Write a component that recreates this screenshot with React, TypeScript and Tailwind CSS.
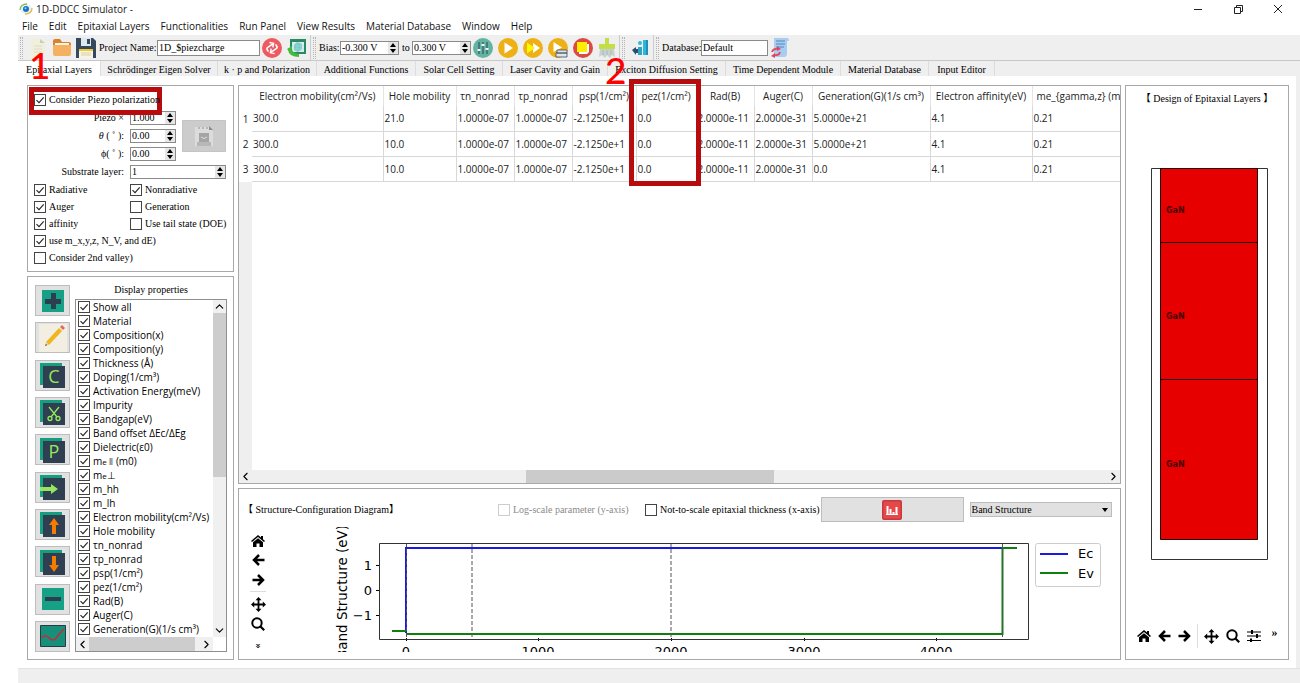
import { useState } from 'react';
import type { ReactNode } from 'react';
import { ChevronDown, ChevronLeft, ChevronRight, ChevronUp } from 'lucide-react';

const menus = [
  'File',
  'Edit',
  'Epitaxial Layers',
  'Functionalities',
  'Run Panel',
  'View Results',
  'Material Database',
  'Window',
  'Help'
];

const tabs = [
  { label: 'Epitaxial Layers', width: 'w-[83px]' },
  { label: 'Schrödinger Eigen Solver', width: 'w-[117px]' },
  { label: 'k · p and Polarization', width: 'w-[99px]' },
  { label: 'Additional Functions', width: 'w-[99px]' },
  { label: 'Solar Cell Setting', width: 'w-[87px]' },
  { label: 'Laser Cavity and Gain', width: 'w-[105px]' },
  { label: 'Exciton Diffusion Setting', width: 'w-[118px]' },
  { label: 'Time Dependent Module', width: 'w-[115px]' },
  { label: 'Material Database', width: 'w-[88px]' },
  { label: 'Input Editor', width: 'w-[66px]' }
];

const properties: ReactNode[] = [
  'Show all',
  'Material',
  'Composition(x)',
  'Composition(y)',
  'Thickness (Å)',
  'Doping(1/cm³)',
  'Activation Energy(meV)',
  'Impurity',
  'Bandgap(eV)',
  'Band offset ΔEc/ΔEg',
  'Dielectric(ε0)',
  <>m<span className="text-[8px]">e ǁ</span> (m0)</>,
  <>m<span className="text-[8px]">e</span>⊥</>,
  'm_hh',
  'm_lh',
  'Electron mobility(cm²/Vs)',
  'Hole mobility',
  'τn_nonrad',
  'τp_nonrad',
  'psp(1/cm²)',
  'pez(1/cm²)',
  'Rad(B)',
  'Auger(C)',
  'Generation(G)(1/s cm³)'
];

const columns = [
  { label: 'Electron mobility(cm²/Vs)', width: 'w-[131px]' },
  { label: 'Hole mobility', width: 'w-[73px]' },
  { label: 'τn_nonrad', width: 'w-[58px]' },
  { label: 'τp_nonrad', width: 'w-[58px]' },
  { label: 'psp(1/cm²)', width: 'w-[64px]' },
  { label: 'pez(1/cm²)', width: 'w-[60px]' },
  { label: 'Rad(B)', width: 'w-[58px]' },
  { label: 'Auger(C)', width: 'w-[58px]' },
  { label: 'Generation(G)(1/s cm³)', width: 'w-[118px]' },
  { label: 'Electron affinity(eV)', width: 'w-[102px]' },
  { label: 'me_{gamma,z} (m', width: '' }
];

const rows = [
  ['300.0', '21.0', '1.0000e-07', '1.0000e-07', '-2.1250e+1', '0.0', '2.0000e-11', '2.0000e-31', '5.0000e+21', '4.1', '0.21'],
  ['300.0', '10.0', '1.0000e-07', '1.0000e-07', '-2.1250e+1', '0.0', '2.0000e-11', '2.0000e-31', '5.0000e+21', '4.1', '0.21'],
  ['300.0', '10.0', '1.0000e-07', '1.0000e-07', '-2.1250e+1', '0.0', '2.0000e-11', '2.0000e-31', '0.0', '4.1', '0.21']
];

const SANS = "font-['Open_Sans','Noto_Sans',sans-serif]";
const SERIF = "font-['Liberation_Serif','Noto_Sans_CJK_TC',serif]";

interface CheckProps {
  label: ReactNode;
  checked?: boolean;
  disabled?: boolean;
  className?: string;
}

const Check = ({ label, checked = false, disabled = false, className = '' }: CheckProps) => {
  const [on, setOn] = useState(checked);

  return (
    <label className={`flex items-center gap-[3px] whitespace-nowrap ${disabled ? 'text-[#8a8a8a]' : ''} ${className}`}>
      <span className="grid shrink-0">
        <input
          type="checkbox"
          checked={on}
          disabled={disabled}
          onChange={() => setOn(!on)}
          className="col-start-1 row-start-1 size-[12px] appearance-none border border-[#444] bg-white disabled:border-[#ccc]"
        />
        {on && (
          <svg viewBox="0 0 12 12" className="pointer-events-none col-start-1 row-start-1 size-[12px]">
            <path d="M2.5 6.2 5 8.6 9.7 3.4" fill="none" stroke="#222" strokeWidth="1.1" />
          </svg>
        )}
      </span>
      <span>{label}</span>
    </label>
  );
};

interface SpinProps {
  id: string;
  value: string;
  label?: string;
  className?: string;
}

const Spin = ({ id, value, label, className = '' }: SpinProps) => (
  <div className={`flex h-[14px] border border-[#8a8a8a] bg-white ${className}`}>
    <input id={id} defaultValue={value} aria-label={label} className="w-0 min-w-0 flex-1 pl-px leading-3 outline-none" />
    <div className="flex w-[10px] flex-col justify-center gap-[2px] bg-[#e6e6e6]">
      <button aria-label="Increase" className="flex justify-center">
        <svg viewBox="0 0 6 4" className="h-1 w-[6px]"><path d="M3 0 6 4H0z" /></svg>
      </button>
      <button aria-label="Decrease" className="flex justify-center">
        <svg viewBox="0 0 6 4" className="h-1 w-[6px]"><path d="M0 0h6L3 4z" /></svg>
      </button>
    </div>
  </div>
);

const Grip = () => <div className="h-[22px] w-[3px] border-x border-dotted border-[#b5b5b5]" />;

/* Toolbar icons */
const Logo = () => (
  <svg viewBox="0 0 14 12" className="h-3 w-[14px]">
    <ellipse cx="7" cy="6" rx="6" ry="5" fill="#e8f1f6" />
    <path d="M1 7C1 3 4 1 8 1" fill="none" stroke="#7fb84a" strokeWidth="1.3" />
    <path d="M13 5c0 4-3 6-7 6" fill="none" stroke="#e4bc4a" strokeWidth="1.3" />
    <circle cx="7" cy="6" r="3" fill="#1673c9" />
    <circle cx="6.5" cy="5.2" r="1" fill="#9ed4ff" />
  </svg>
);

const NewIcon = () => (
  <svg viewBox="0 0 20 20" className="size-5">
    <path d="M3 1h9l5 4v14H3z" fill="#f0efdc" />
    <path d="M12 1v4h5z" fill="#c9d0ad" />
    <path d="M6 8h8M6 11h8M6 14h8" stroke="#dcdcc6" />
  </svg>
);

const FolderIcon = () => (
  <svg viewBox="0 0 20 20" className="size-5">
    <path d="M1 3q0-2 2-2h5l2 3h7q2 0 2 2v5H1z" fill="#d9812d" />
    <path d="M3 5h14v5H3z" fill="#fbf3e4" />
    <path d="M1 7h18v9q0 2-2 2H3q-2 0-2-2z" fill="#f3b161" />
  </svg>
);

const SaveIcon = () => (
  <svg viewBox="0 0 20 20" className="size-5">
    <path d="M0 0h17l3 3v17H0z" fill="#34495e" />
    <path d="M5 0h10v8H5z" fill="#dfe6ec" />
    <path d="M11 1h3v5h-3z" fill="#34495e" />
    <path d="M3 11h14v9H3z" fill="#f7f4e6" />
    <path d="M3 11h14v2H3z" fill="#f2c832" />
    <path d="M5 15h10M5 17h10" stroke="#d9cf9e" />
  </svg>
);

const SyncIcon = () => (
  <svg viewBox="0 0 20 20" className="size-5">
    <circle cx="10" cy="10" r="10" fill="#ee5a5f" />
    <path d="M5 11V9q0-2 2-2h6M11 4l3 3-3 3M15 9v2q0 2-2 2H7M9 10l-3 3 3 3" fill="none" stroke="#fff" strokeWidth="1.5" transform="rotate(-35 10 10)" />
  </svg>
);

const ExportIcon = () => (
  <svg viewBox="0 0 20 20" className="size-5">
    <path d="M3 1h16v15H3z" fill="#2a8a68" />
    <path d="M5 4h12v10H5z" fill="#d5efea" />
    <path d="M7 7l3-3 5 2v5l-4 3-4-2z" fill="#7cc8c9" />
    <path d="M10 4v10M14 4v10M5 8h12M5 11h12" stroke="#a9dcd8" strokeWidth=".5" />
    <path d="M0 11l5-3v3q0 4 7 5v3Q2 19 1 12z" fill="#44b83c" />
  </svg>
);

const SlidersIcon = () => (
  <svg viewBox="0 0 20 20" className="size-5">
    <circle cx="10" cy="10" r="10" fill="#62b3a0" />
    <path d="M6 4v12M10 4v12M14 4v12" stroke="#36566b" strokeWidth="1.2" />
    <path d="M4.5 12h3M8.5 7h3M12.5 11h3" stroke="#eef6f3" strokeWidth="2" />
  </svg>
);

const PlayIcon = () => (
  <svg viewBox="0 0 20 20" className="size-5">
    <circle cx="10" cy="10" r="10" fill="#edb015" />
    <path d="M6.5 4.5 15 10l-8.5 5.5z" fill="#fff" />
  </svg>
);

const FastIcon = () => (
  <svg viewBox="0 0 20 20" className="size-5">
    <circle cx="10" cy="10" r="10" fill="#edb015" />
    <path d="M10 5l7 5-7 5z" fill="#fff" />
    <path d="M4 4.5 12 10l-8 5.5z" fill="#fff600" />
  </svg>
);

const PlayLogIcon = () => (
  <svg viewBox="0 0 20 20" className="size-5">
    <circle cx="10" cy="10" r="10" fill="#edb015" />
    <path d="M5.5 4 14 9.5 5.5 14z" fill="#fff" />
    <path d="M9 12h10v3H9zM8 15h11v4H8z" fill="#dce7ef" stroke="#3f4b5b" strokeWidth=".8" />
  </svg>
);

const StopIcon = () => (
  <svg viewBox="0 0 20 20" className="size-5">
    <circle cx="10" cy="10" r="10" fill="#dc4a42" />
    <path d="M6 6h10v8l-2 2H6z" fill="#fff" />
    <path d="M4 4h10v10H4z" fill="#ffee00" />
  </svg>
);

const BrushIcon = () => (
  <svg viewBox="0 0 18 20" className="h-5 w-[18px]">
    <path d="M7 0h4v6h6v5H1V6h6z" fill="#c4de47" />
    <path d="M2 11h14l1 8-3-2-2 3-3-3-2 3-3-3-3 2z" fill="#c7d2d0" />
    <path d="M5 12v5M9 12v5M13 12v5" stroke="#a9bcae" />
  </svg>
);

const BarsIcon = () => (
  <svg viewBox="0 0 18 18" className="size-[18px]">
    <path d="M7 8h4v8H7z" fill="#2fa3c4" />
    <path d="M12 1h5v15h-5z" fill="#1f8fc0" />
    <path d="M12 1h3v15h-3z" fill="#30b7d5" />
    <circle cx="9" cy="4" r="2" fill="#36b4e0" />
    <path d="M1 11l4-3v2h2v4H5v2z" fill="#27506f" />
  </svg>
);

const DatabaseIcon = () => (
  <svg viewBox="0 0 20 20" className="size-5">
    <path d="M4 0h13q2 0 2 3h-2v13q0 3-3 3H4z" fill="#a9cdf0" />
    <path d="M6 3h9M6 6h9M6 9h8" stroke="#4e86bd" />
    <path d="M2 14q1-4 6-3M10 14q-1 4-6 3" fill="none" stroke="#e3435d" strokeWidth="1.7" />
    <path d="M7 8l4 3-4 2zM5 15l-4 3 4 2z" fill="#e3435d" />
  </svg>
);

const CalendarIcon = () => (
  <svg viewBox="0 0 20 24" className="h-6 w-5">
    <path d="M1 3h14l4 4v15H1z" fill="#dcdcdc" />
    <path d="M15 2l4 4h-4z" fill="#8b8b8b" />
    <path d="M4 4h2M8 4h2M12 4h2M3 19h14M3 21h14" stroke="#aaa" strokeWidth="1.5" />
    <path d="M5 9h10v9H5z" fill="#a5a5a5" />
    <path d="M7 13q3 3 6 0" stroke="#ddd" fill="none" />
  </svg>
);

/* Layer edit buttons in the left column */
const Tile = ({ children }: { children?: ReactNode }) => (
  <svg viewBox="0 0 25 26" className="h-[26px] w-[25px]">
    <path d="M0 1h22v22H0z" fill="#169f7f" />
    <path d="M3 4h22v22H3z" fill="#2f3e50" />
    {children}
  </svg>
);

const layerActions = [
  {
    name: 'Add layer',
    icon: (
      <svg viewBox="0 0 22 22" className="size-[22px]">
        <path d="M0 0h22v22H0z" fill="#16a085" />
        <path d="M9 3h5v6h5v5h-5v5H9v-5H3V9h6z" fill="#2c3e50" />
      </svg>
    )
  },
  {
    name: 'Edit layer',
    icon: (
      <svg viewBox="0 0 28 28" className="size-7">
        <path d="M0 0h28v28H0z" fill="#f2eee2" />
        <path d="M7 18 20 4l3 3L10 21z" fill="#f0b51f" />
        <path d="M21 3l2-2 3 3-2 2z" fill="#e06a5c" />
        <path d="M7 18l3 3-4 1z" fill="#e8cfa0" />
        <path d="M6 22l1-2 1 1z" fill="#333" />
      </svg>
    )
  },
  {
    name: 'Copy layer',
    icon: (
      <Tile>
        <text x="14" y="21" textAnchor="middle" fontSize="18" fill="#93e85f">C</text>
      </Tile>
    )
  },
  {
    name: 'Cut layer',
    icon: (
      <Tile>
        <g fill="none" stroke="#93e85f" strokeWidth="1.3">
          <path d="M9 8l8 10M19 8l-8 10" />
          <circle cx="10" cy="19.5" r="2" />
          <circle cx="18" cy="19.5" r="2" />
        </g>
      </Tile>
    )
  },
  {
    name: 'Paste layer',
    icon: (
      <Tile>
        <text x="14" y="21" textAnchor="middle" fontSize="18" fill="#93e85f">P</text>
      </Tile>
    )
  },
  {
    name: 'Insert layer',
    icon: (
      <Tile>
        <path d="M0 13h11v-3l7 5-7 5v-3H0z" fill="#93e85f" />
      </Tile>
    )
  },
  {
    name: 'Move up',
    icon: (
      <Tile>
        <path d="M14 7l5 7h-3v9h-4v-9H9z" fill="#f57c00" />
      </Tile>
    )
  },
  {
    name: 'Move down',
    icon: (
      <Tile>
        <path d="M14 23l5-7h-3V7h-4v9H9z" fill="#f57c00" />
      </Tile>
    )
  },
  {
    name: 'Remove layer',
    icon: (
      <svg viewBox="0 0 22 22" className="size-[22px]">
        <path d="M0 0h22v22H0z" fill="#16a085" />
        <path d="M3 9h16v4H3z" fill="#2c3e50" />
      </svg>
    )
  },
  {
    name: 'Plot',
    icon: (
      <svg viewBox="0 0 26 22" className="h-[22px] w-[26px]">
        <path d="M.5.5h25v21H.5z" fill="#16907a" stroke="#263a48" />
        <path d="M2 13q3-4 6-1 5 6 9 0 3-4 7-8" fill="none" stroke="#c92a35" strokeWidth="1.5" />
      </svg>
    )
  }
];

/* Plot navigation icons */
const HomeIcon = () => (
  <svg viewBox="0 0 14 12" className="h-3 w-[14px]">
    <path d="M0 6 7 0l3 2.6V1h2v3.3L14 6l-1 1-6-5-6 5z" />
    <path d="M2 7.3 7 3.2l5 4.1V12H8.5V8.5h-3V12H2z" />
  </svg>
);

const ArrowIcon = ({ flip = false }: { flip?: boolean }) => (
  <svg viewBox="0 0 13 12" className={`h-3 w-[13px] ${flip ? '-scale-x-100' : ''}`}>
    <path d="M12.5 6H2.5M7 1 2 6l5 5" fill="none" stroke="#000" strokeWidth="2.5" />
  </svg>
);

const MoveIcon = () => (
  <svg viewBox="0 0 15 15" className="size-[15px]">
    <path d="M7.5 0 10.5 3.2H8.4v3.4H11.8V4.5L15 7.5 11.8 10.5V8.4H8.4v3.4h2.1L7.5 15 4.5 11.8h2.1V8.4H3.2v2.1L0 7.5 3.2 4.5v2.1h3.4V3.2H4.5z" />
  </svg>
);

const ZoomIcon = () => (
  <svg viewBox="0 0 14 14" className="size-[14px]">
    <circle cx="6" cy="6" r="4.7" fill="none" stroke="#000" strokeWidth="2" />
    <path d="M9.5 9.5 13.2 13.2" stroke="#000" strokeWidth="2.2" />
  </svg>
);

const ConfigIcon = () => (
  <svg viewBox="0 0 14 12" className="h-3 w-[14px]">
    <path d="M0 2h14M0 6h14M0 10.5h14" stroke="#000" strokeWidth="1.2" />
    <path d="M4 0h2v4H4zM9 4h2v4H9zM3 8.5h2V12H3z" />
  </svg>
);

const BandChart = () => (
  <svg viewBox="0 0 777 125" className="w-full font-['DejaVu_Sans',sans-serif] text-[13px]">
    <text x="12" y="65" textAnchor="middle" fontSize="13.5" transform="rotate(-90 12 65)">Band Structure (eV)</text>
    <g textAnchor="end">
      <text x="37" y="43">1</text>
      <text x="37" y="68">0</text>
      <text x="37" y="93">−1</text>
    </g>
    <g textAnchor="middle">
      <text x="71" y="129">0</text>
      <text x="203" y="129">1000</text>
      <text x="336" y="129">2000</text>
      <text x="469" y="129">3000</text>
      <text x="601" y="129">4000</text>
    </g>
    <path d="M41 38.5h3M41 63.5h3M41 88.5h3M71.5 111v3M203.5 111v3M336.5 111v3M469.5 111v3M601.5 111v3" stroke="#000" />
    <path d="M71 106V21H668" fill="none" stroke="#1a1ae6" strokeWidth="2" />
    <path d="M57 104H71M71 107H667.5V21H682" fill="none" stroke="#0d800d" strokeWidth="2" />
    <path d="M71.5 16v96M137 16v96M336 16v96M667.5 16v96" stroke="#555" strokeDasharray="4 2" />
    <path d="M44.5 16.5h649v96h-649z" fill="none" stroke="#333" />
    <rect x="700.5" y="16.5" width="65" height="43" rx="2" fill="#fff" stroke="#ccc" />
    <path d="M705 27h28" stroke="#1a1ae6" strokeWidth="2" />
    <path d="M705 46h28" stroke="#0d800d" strokeWidth="2" />
    <text x="743" y="31">Ec</text>
    <text x="743" y="51">Ev</text>
  </svg>
);

const LayerStack = () => (
  <svg viewBox="0 0 117 392" className="w-[117px] font-['DejaVu_Sans',sans-serif] text-[8px] font-bold">
    <path d="M.5.5h116v391H.5z" fill="#fff" stroke="#333" />
    <path d="M9.5.5h97v371h-97z" fill="#e60000" stroke="#200" />
    <path d="M9.5 74.5h97M9.5 211.5h97" stroke="#200" />
    <g fill="#4a0000">
      <text x="15" y="45">GaN</text>
      <text x="15" y="151">GaN</text>
      <text x="15" y="299">GaN</text>
    </g>
  </svg>
);

const App = () => {
  const [activeTab, setActiveTab] = useState('Epitaxial Layers');

  return (
    <div className={`flex min-h-screen flex-col overflow-hidden bg-white text-[10px] leading-[14px] text-black ${SANS}`}>
      {/* Title bar */}
      <header className="flex h-[17px] items-center gap-[3px] pr-4 pl-[19px]">
        <Logo />
        <h1 className="text-[#222]">1D-DDCC Simulator -</h1>
        <div className="ml-auto flex items-center gap-7">
          <button aria-label="Minimize"><svg viewBox="0 0 12 12" className="size-3"><path d="M2 6.5h8" stroke="#222" /></svg></button>
          <button aria-label="Restore">
            <svg viewBox="0 0 12 12" className="size-3" fill="none" stroke="#222"><path d="M2.5 4.5h6v6h-6zM4.5 4V2.5h6v6H9" /></svg>
          </button>
          <button aria-label="Close"><svg viewBox="0 0 12 12" className="size-3"><path d="M2 2l8 8M10 2l-8 8" stroke="#222" /></svg></button>
        </div>
      </header>

      {/* Menu bar */}
      <nav className="flex h-[18px] items-center gap-[11px] pl-[22px] text-[#111]">
        {menus.map((menu) => (
          <button key={menu} className="whitespace-nowrap">{menu}</button>
        ))}
      </nav>

      <div className={`ml-[18px] flex flex-1 flex-col bg-[#efefef] ${SERIF}`}>
        {/* Toolbar */}
        <div className="flex h-[26px] items-center border-b border-[#c8c8c8] pl-[2px] whitespace-nowrap">
          <Grip />
          <div className="ml-[5px] flex items-center gap-1">
            <button aria-label="New"><NewIcon /></button>
            <button aria-label="Open"><FolderIcon /></button>
            <button aria-label="Save"><SaveIcon /></button>
          </div>
          <label htmlFor="project" className="ml-[3px] w-[58px]">Project Name:</label>
          <input id="project" defaultValue="1D_$piezcharge" className="h-4 w-[103px] border border-[#8a8a8a] bg-white pl-px" />
          <div className="ml-[2px] flex items-center gap-[5px]">
            <button aria-label="Reload"><SyncIcon /></button>
            <button aria-label="Export"><ExportIcon /></button>
          </div>
          <div className="ml-[3px] h-[26px] border-l border-[#ccc]" />
          <div className="ml-[2px]"><Grip /></div>
          <label htmlFor="bias-from" className="ml-[3px] w-[21px]">Bias:</label>
          <Spin id="bias-from" value="-0.300 V" className="w-[59px]" />
          <label htmlFor="bias-to" className="ml-[3px] w-[10px]">to</label>
          <Spin id="bias-to" value="0.300 V" className="w-[59px]" />
          <div className="ml-[2px] flex items-center gap-[5px]">
            <button aria-label="Settings"><SlidersIcon /></button>
            <button aria-label="Run"><PlayIcon /></button>
            <button aria-label="Run all"><FastIcon /></button>
            <button aria-label="Run with log"><PlayLogIcon /></button>
            <button aria-label="Stop"><StopIcon /></button>
            <button aria-label="Clear"><BrushIcon /></button>
          </div>
          <div className="ml-[3px] h-[26px] border-l border-[#ccc]" />
          <div className="ml-[2px]"><Grip /></div>
          <button aria-label="Results" className="ml-[6px]"><BarsIcon /></button>
          <div className="ml-1 h-[26px] border-l border-[#ccc]" />
          <div className="ml-[2px]"><Grip /></div>
          <label htmlFor="database" className="ml-[3px] w-[39px]">Database:</label>
          <input id="database" defaultValue="Default" className="h-4 w-[67px] border border-[#8a8a8a] bg-white pl-px" />
          <button aria-label="Update database" className="ml-[2px]"><DatabaseIcon /></button>
        </div>

        {/* Tabs */}
        <div role="tablist" className="flex h-[15px]">
          {tabs.map((tab) => (
            <button
              key={tab.label}
              role="tab"
              aria-selected={tab.label === activeTab}
              onClick={() => setActiveTab(tab.label)}
              className={`flex items-center justify-center border-r border-[#ddd] pt-[2px] whitespace-nowrap ${tab.width} ${tab.label === activeTab ? 'bg-white' : ''}`}
            >
              {tab.label}
            </button>
          ))}
        </div>

        <main className="mr-1 flex flex-1 gap-1 bg-white pt-[9px] pr-[7px] pb-2 pl-[9px]">
          {/* Left column */}
          <div className="flex w-[207px] shrink-0 flex-col gap-1">
            <section className="relative border border-[#a8a8a8] px-[6px] pt-[5px] pb-[5px]">
              <div className="absolute top-px left-px h-[28px] w-[133px] border-[5px] border-[#b80b0e]" />
              <Check label="Consider Piezo polarization" checked className="relative h-[18px]" />
              <div className="grid auto-rows-[18px] grid-cols-[90px_46px_44px] items-center gap-x-[6px]">
                <label htmlFor="piezo" className="text-right">Piezo ×</label>
                <Spin id="piezo" value="1.000" />
                <button aria-label="Load profile" className="row-span-3 flex h-8 items-center justify-center border border-[#c4c4c4] bg-[#ccc]">
                  <CalendarIcon />
                </button>
                <label htmlFor="theta" className="text-right"><i>θ</i> ( ˚ ):</label>
                <Spin id="theta" value="0.00" />
                <label htmlFor="phi" className="text-right">ϕ( ˚ ):</label>
                <Spin id="phi" value="0.00" />
                <label htmlFor="substrate" className="text-right">Substrate layer:</label>
                <Spin id="substrate" value="1" className="col-span-2" />
              </div>
              <div className="grid auto-rows-[17px] grid-cols-[96px_1fr] items-center">
                <Check label="Radiative" checked />
                <Check label="Nonradiative" checked />
                <Check label="Auger" checked />
                <Check label="Generation" />
                <Check label="affinity" checked />
                <Check label="Use tail state (DOE)" />
                <Check label="use m_x,y,z, N_V, and dE)" checked className="col-span-2" />
                <Check label="Consider 2nd valley)" className="col-span-2" />
              </div>
            </section>

            <section className="flex flex-1 gap-[5px] border border-[#a8a8a8] pt-[6px] pr-[6px] pb-[7px] pl-[7px]">
              <div className={`flex flex-col justify-between pt-[2px] ${SANS}`}>
                {layerActions.map((action) => (
                  <button
                    key={action.name}
                    aria-label={action.name}
                    className="flex h-[31px] w-[35px] items-center justify-center border border-[#bdbdbd] bg-[#e1e1e1]"
                  >
                    {action.icon}
                  </button>
                ))}
              </div>
              <div className="flex min-w-0 flex-1 flex-col">
                <h2 className="h-4 text-center">Display properties</h2>
                <div className={`flex flex-1 flex-col border border-[#8f8f8f] ${SANS}`}>
                  <div className="flex flex-1">
                    <ul className="w-0 flex-1 overflow-hidden pl-[2px]">
                      {properties.map((property, i) => (
                        <li key={i}>
                          <Check label={property} checked className="h-[14px]" />
                        </li>
                      ))}
                    </ul>
                    <div className="flex w-[13px] flex-col items-center bg-[#f0f0f0]">
                      <ChevronUp className="size-[13px]" />
                      <div className="h-[164px] w-full bg-[#cdcdcd]" />
                      <ChevronDown className="mt-auto size-[13px]" />
                    </div>
                  </div>
                  <div className="mr-[13px] flex h-[14px] items-center bg-[#f0f0f0]">
                    <ChevronLeft className="size-[13px]" />
                    <div className="h-full w-[106px] bg-[#cdcdcd]" />
                    <ChevronRight className="ml-auto size-[13px]" />
                  </div>
                </div>
              </div>
            </section>
          </div>

          {/* Middle column */}
          <div className="flex min-w-0 flex-1 flex-col gap-1">
            <section className={`relative flex flex-1 flex-col border border-[#a8a8a8] ${SANS}`}>
              <div className="absolute -top-[7px] left-[390px] h-[107px] w-[72px] border-[5px] border-[#b80b0e]" />
              <div className="overflow-hidden">
                <table className="w-full table-fixed border-collapse text-[#222]">
                  <thead>
                    <tr className="h-5">
                      <th className="w-[13px]" />
                      {columns.map((column) => (
                        <th key={column.label} className={`border-r border-[#e4e4e4] p-0 text-center font-normal whitespace-nowrap last:border-r-0 last:pl-1 last:text-left ${column.width}`}>
                          {column.label}
                        </th>
                      ))}
                    </tr>
                  </thead>
                  <tbody>
                    {rows.map((row, i) => (
                      <tr key={i} className="h-[25px]">
                        <th className="p-0 font-normal">{i + 1}</th>
                        {row.map((cell, j) => (
                          <td key={j} className="border-r border-b border-[#d8d8d8] p-0 pl-px whitespace-nowrap last:border-r-0">{cell}</td>
                        ))}
                      </tr>
                    ))}
                  </tbody>
                </table>
              </div>
              <div className="w-[13px] flex-1 bg-[#efefef]" />
              <div className="flex h-[13px] items-center bg-[#efefef]">
                <ChevronLeft className="size-[13px]" />
                <div className="flex h-full flex-1">
                  <div className="ml-[32%] w-[29%] bg-[#cbcbcb]" />
                </div>
                <ChevronRight className="size-[13px]" />
              </div>
            </section>

            <section className="flex flex-col border border-[#a8a8a8] pt-2 pr-2 pb-[6px]">
              <div className="flex h-[25px] items-center">
                <h2 className="w-[259px] pl-1 whitespace-nowrap">【 Structure-Configuration Diagram】</h2>
                <Check label="Log-scale parameter (y-axis)" disabled className="w-[147px]" />
                <Check label="Not-to-scale epitaxial thickness (x-axis)" className="w-[176px]" />
                <button aria-label="Plot structure" className="flex h-[25px] flex-1 items-center justify-center border border-[#bdbdbd] bg-[#e1e1e1]">
                  <svg viewBox="0 0 20 20" className="size-5">
                    <rect width="20" height="20" rx="2" fill="#c9383c" />
                    <rect x="1.5" y="1.5" width="17" height="17" rx="1" fill="#e5484b" />
                    <path d="M5.5 6v9M8.5 9v6M11.5 12v3M14.500 7v8" stroke="#fff" strokeWidth="2" />
                    <path d="M4 14.5h12" stroke="#fff" />
                  </svg>
                </button>
                <div className="ml-[6px] grid flex-1 items-center border border-[#bdbdbd] bg-[#e1e1e1]">
                  <select aria-label="Diagram type" className="col-start-1 row-start-1 h-[13px] appearance-none pl-px leading-3">
                    <option>Band Structure</option>
                  </select>
                  <svg viewBox="0 0 6 4" className="pointer-events-none col-start-1 row-start-1 mr-[3px] h-1 w-[6px] justify-self-end"><path d="M0 0h6L3 4z" /></svg>
                </div>
              </div>
              <div className="mt-[5px] flex">
                <div className="flex w-[38px] flex-col items-center pt-2">
                  <button aria-label="Home" className="flex h-[19px] justify-center"><HomeIcon /></button>
                  <button aria-label="Back" className="flex h-5 justify-center"><ArrowIcon /></button>
                  <button aria-label="Forward" className="flex h-[17px] justify-center"><ArrowIcon flip /></button>
                  <div className="w-4 border-t border-[#ddd]" />
                  <button aria-label="Pan" className="mt-[5px] flex h-5 justify-center"><MoveIcon /></button>
                  <button aria-label="Zoom" className="flex h-[22px] justify-center"><ZoomIcon /></button>
                  <button aria-label="More" className="rotate-90 font-bold">»</button>
                </div>
                <div className="ml-[58px] min-w-0 flex-1"><BandChart /></div>
              </div>
            </section>
          </div>

          {/* Right column */}
          <section className="flex w-[164px] shrink-0 flex-col items-center border border-[#a8a8a8] pt-[6px]">
            <h2 className="whitespace-nowrap">【 Design of Epitaxial Layers 】</h2>
            <div className="mt-[62px] pl-1"><LayerStack /></div>
            <div className="mt-auto mb-[11px] flex h-6 items-center gap-[7px]">
              <button aria-label="Home"><HomeIcon /></button>
              <button aria-label="Back"><ArrowIcon /></button>
              <button aria-label="Forward"><ArrowIcon flip /></button>
              <div className="-mx-px h-6 border-l border-[#ddd]" />
              <button aria-label="Pan"><MoveIcon /></button>
              <button aria-label="Zoom"><ZoomIcon /></button>
              <button aria-label="Configure"><ConfigIcon /></button>
              <button aria-label="More" className="mb-2 ml-1 text-[12px] font-bold">»</button>
            </div>
          </section>
        </main>

        {/* Status bar */}
        <footer className="h-[15px] border-t border-[#e2e2e2]" />
      </div>

      {/* Step markers */}
      <div className="absolute top-[47px] left-[29px] font-['Lato',sans-serif] text-[37px] leading-9 font-medium text-[#f00]">1</div>
      <div className="absolute top-[52px] left-[605px] font-['Lato',sans-serif] text-[37px] leading-9 font-medium text-[#f00]">2</div>
    </div>
  );
};

export default App;
